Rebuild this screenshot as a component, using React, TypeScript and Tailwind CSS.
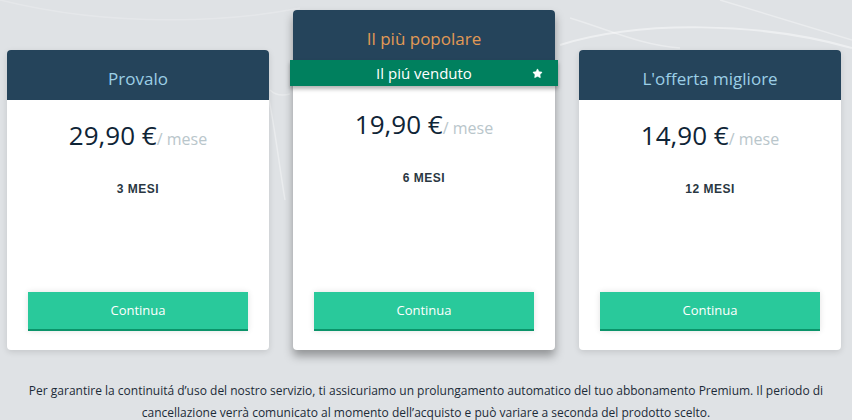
import { Star } from 'lucide-react'

type Plan = {
  title: string
  price: string
  months: string
  featured?: boolean
}

const plans: Plan[] = [
  { title: 'Provalo', price: '29,90 €', months: '3 MESI' },
  { title: 'Il più popolare', price: '19,90 €', months: '6 MESI', featured: true },
  { title: "L'offerta migliore", price: '14,90 €', months: '12 MESI' },
]

function Backdrop() {
  return (
    <svg className="pointer-events-none absolute inset-0 h-full w-full" viewBox="0 0 852 420" preserveAspectRatio="none" fill="none">
      <path d="M560 45 C 640 20, 760 22, 852 48" stroke="white" strokeOpacity="0.45" strokeWidth="2" />
      <path d="M570 18 C 610 30, 640 45, 680 48" stroke="white" strokeOpacity="0.35" strokeWidth="1.5" />
      <path d="M720 0 C 770 15, 820 30, 852 40" stroke="white" strokeOpacity="0.35" strokeWidth="1.5" />
      <path d="M255 60 C 270 80, 275 140, 285 200" stroke="white" strokeOpacity="0.35" strokeWidth="1.5" />
      <path d="M270 90 C 275 95, 282 96, 290 94" stroke="white" strokeOpacity="0.3" strokeWidth="1.5" />
      <path d="M0 0 C 120 30, 240 20, 300 8" stroke="white" strokeOpacity="0.2" strokeWidth="1.5" />
    </svg>
  )
}

function PlanCard({ plan }: { plan: Plan }) {
  const featured = !!plan.featured
  return (
    <div
      className={`relative flex w-[262px] flex-col rounded-[4px] bg-white ${
        featured ? 'h-[340px] shadow-[0_6px_10px_rgba(0,0,0,0.35)]' : 'h-[300px] shadow-[0_2px_6px_rgba(0,0,0,0.12)]'
      }`}
    >
      <div className="flex h-[50px] items-center justify-center rounded-t-[4px] bg-[#25445b] pt-[7px]">
        <span className={`text-[17px] ${featured ? 'text-[#e29a55]' : 'text-[#9ccfe6]'}`}>{plan.title}</span>
      </div>

      {featured && (
        <div className="relative -mx-[3px] flex h-[26px] items-center justify-center bg-[#00805e] shadow-[0_3px_4px_rgba(0,0,0,0.3)]">
          <span className="text-[15px] text-white">Il piú venduto</span>
          <Star className="absolute right-[15px] top-[8px] h-[11px] w-[11px] fill-white text-white" strokeWidth={1} />
        </div>
      )}

      <div className={`flex items-baseline justify-center ${featured ? 'pt-[20px]' : 'pt-[17px]'}`}>
        <span className="text-[26px] leading-[36px] text-[#0f2436]">{plan.price}</span>
        <span className="text-[16px] text-[#b9c6cb]">/ mese</span>
      </div>

      <div className="mt-[28px] text-center font-['Liberation_Sans',Arial,sans-serif] text-[12px] font-bold leading-[16px] tracking-[0.5px] text-[#2a3742]">
        {plan.months}
      </div>

      <div className="mt-auto px-[21px] pb-[19px]">
        <button className="flex h-[39px] w-full items-center justify-center border-b-2 border-[#0b946a] bg-[#29c99b] text-[13px] text-white shadow-[0_0_6px_rgba(0,0,0,0.12)]">
          Continua
        </button>
      </div>
    </div>
  )
}

export default function App() {
  return (
    <div className="relative h-[420px] w-[852px] overflow-hidden bg-[#dfe2e5] font-['Open_Sans','Noto_Sans',sans-serif]">
      <Backdrop />
      <div className="relative flex items-end gap-[24px] pl-[7px] pt-[10px]">
        {plans.map((plan) => (
          <PlanCard key={plan.title} plan={plan} />
        ))}
      </div>
      <p className="relative mt-[30px] text-center text-[12px] leading-[22px] text-[#1c2b38]">
        Per garantire la continuitá d’uso del nostro servizio, ti assicuriamo un prolungamento automatico del tuo abbonamento Premium. Il periodo di
        <br />
        cancellazione verrà comunicato al momento dell’acquisto e può variare a seconda del prodotto scelto.
      </p>
    </div>
  )
}
